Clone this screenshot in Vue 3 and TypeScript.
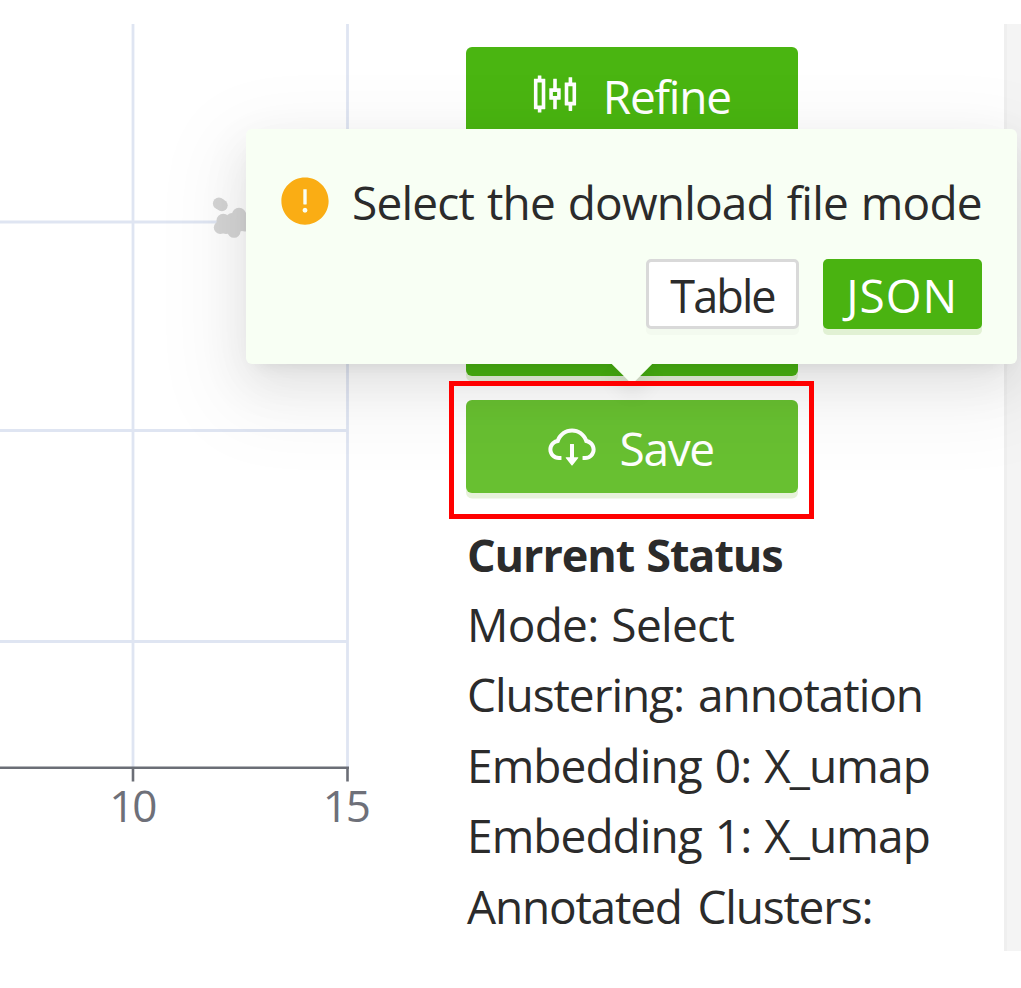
<script setup lang="ts">
interface StatusLine {
  id: string
  text: string
}

const statusLines: StatusLine[] = [
  { id: 'mode', text: 'Mode: Select' },
  { id: 'clustering', text: 'Clustering: annotation' },
  { id: 'embedding', text: 'Embedding 0: X_umap' },
  { id: 'embedding', text: 'Embedding 1: X_umap' },
  { id: 'annotated', text: 'Annotated Clusters:' },
]

const columns: number[] = [133, 347.5]
const rows: number[] = [198, 406.5, 617.5]

// Scatter points of the visible cluster: x, y, radius
const points: [number, number, number][] = [
  [218.9, 179.4, 6],
  [221.8, 181.3, 5.9],
  [223.3, 196.5, 6.8],
  [231, 199, 7.5],
  [239, 190.8, 7],
  [232, 195, 6],
  [220.3, 203.5, 6.5],
  [226, 203, 7],
  [234, 207.3, 6.5],
  [239, 198, 9.5],
  [245, 198, 9.5],
]
</script>

<template>
  <main class="page">
    <svg class="chart" width="466" height="927" viewBox="0 0 466 927">
      <g class="grid">
        <line v-for="x in columns" :key="x" :x1="x" :x2="x" y1="0" y2="744" />
        <line v-for="y in rows" :key="y" x1="0" x2="348" :y1="y" :y2="y" />
      </g>
      <g class="axis">
        <line x1="0" x2="349" y1="743.7" y2="743.7" />
        <line v-for="x in columns" :key="x" :x1="x" :x2="x" y1="743.7" y2="757.5" />
      </g>
      <g class="points">
        <circle v-for="(p, i) in points" :key="i" :cx="p[0]" :cy="p[1]" :r="p[2]" />
      </g>
      <text class="tick" x="132.3" y="798">10</text>
      <text class="tick" x="345.8" y="798">15</text>
    </svg>

    <aside class="sidebar">
      <div class="actions">
        <button class="action">
          <svg class="icon" viewBox="0 0 1024 1024">
            <path d="M320 224h-66v-56c0-4.4-3.6-8-8-8h-52c-4.4 0-8 3.6-8 8v56h-66c-4.4 0-8 3.6-8 8v560c0 4.4 3.6 8 8 8h66v56c0 4.4 3.6 8 8 8h52c4.4 0 8-3.6 8-8v-56h66c4.4 0 8-3.6 8-8V232c0-4.4-3.6-8-8-8zm-60 508h-80V292h80v440zm644-436h-66v-96c0-4.4-3.6-8-8-8h-52c-4.4 0-8 3.6-8 8v96h-66c-4.4 0-8 3.6-8 8v416c0 4.4 3.6 8 8 8h66v96c0 4.4 3.6 8 8 8h52c4.4 0 8-3.6 8-8v-96h66c4.4 0 8-3.6 8-8V304c0-4.4-3.6-8-8-8zm-60 364h-80V364h80v296zM612 404h-66V232c0-4.4-3.6-8-8-8h-52c-4.4 0-8 3.6-8 8v172h-66c-4.4 0-8 3.6-8 8v200c0 4.4 3.6 8 8 8h66v172c0 4.4 3.6 8 8 8h52c4.4 0 8-3.6 8-8V620h66c4.4 0 8-3.6 8-8V412c0-4.4-3.6-8-8-8zm-60 145a3 3 0 01-3 3h-74a3 3 0 01-3-3v-74a3 3 0 013-3h74a3 3 0 013 3v74z" />
          </svg>
          <span class="label refine">Refine</span>
        </button>
        <button class="action"></button>
        <button class="action"></button>
        <button class="action hover">
          <svg class="icon" viewBox="0 0 1024 1024">
            <path d="M624 706.3h-74.1V464c0-4.4-3.6-8-8-8h-60c-4.4 0-8 3.6-8 8v242.3H400c-6.7 0-10.4 7.7-6.3 12.9l112 141.7a8 8 0 0012.6 0l112-141.7c4.1-5.2.4-12.9-6.3-12.9z" />
            <path d="M811.4 366.7C765.6 245.9 648.9 160 512.2 160S258.8 245.8 213 366.6C127.3 389.1 64 467.2 64 560c0 110.5 89.5 200 199.9 200H304c4.4 0 8-3.6 8-8v-60c0-4.4-3.6-8-8-8h-40.1c-33.7 0-65.4-13.4-89-37.7-23.5-24.2-36-56.8-34.9-90.6.9-26.4 9.9-51.2 26.2-72.1 16.7-21.3 40.1-36.8 66.1-43.7l37.9-9.9 13.9-36.6c8.6-22.8 20.6-44.1 35.7-63.4a245.6 245.6 0 0152.4-49.9c41.1-28.9 89.5-44.2 140-44.2s98.9 15.3 140 44.2c19.9 14 37.5 30.8 52.4 49.9 15.1 19.3 27.1 40.7 35.7 63.4l13.8 36.5 37.8 10C846.1 454.5 884 503.8 884 560c0 33.1-12.9 64.3-36.3 87.7a123.07 123.07 0 01-87.6 36.3H720c-4.4 0-8 3.6-8 8v60c0 4.4 3.6 8 8 8h40.1C870.5 760 960 670.5 960 560c0-92.7-63.1-170.7-148.6-193.3z" />
          </svg>
          <span class="label save">Save</span>
        </button>
      </div>
      <section class="status">
        <div class="title"><strong class="heading">Current Status</strong></div>
        <div v-for="line in statusLines" :key="line.text">
          <span :class="line.id">{{ line.text }}</span>
        </div>
      </section>
    </aside>
    <div class="scrollbar"></div>

    <div class="popover">
      <div class="message">
        <svg class="warning" viewBox="0 0 1024 1024">
          <path d="M512 64C264.6 64 64 264.6 64 512s200.6 448 448 448 448-200.6 448-448S759.4 64 512 64zm-32 232c0-4.4 3.6-8 8-8h48c4.4 0 8 3.6 8 8v272c0 4.4-3.6 8-8 8h-48c-4.4 0-8-3.6-8-8V296zm32 440a48.01 48.01 0 010-96 48.01 48.01 0 010 96z" />
        </svg>
        <span class="question">Select the download file mode</span>
      </div>
      <div class="choices">
        <button class="choice plain"><span class="table">Table</span></button>
        <button class="choice primary"><span class="json">JSON</span></button>
      </div>
      <span class="arrow"></span>
    </div>
    <div class="highlight"></div>
  </main>
</template>

<style scoped>
.page {
  position: relative;
  box-sizing: border-box;
  display: flex;
  width: 1021px;
  height: 988px;
  padding: 24px 0 37px;
  overflow: hidden;
  background: #fff;
  color: #2b2b2b;
  font-family: 'Open Sans', 'Noto Sans', sans-serif;
  font-size: 46px;
  line-height: 70.4px;
  white-space: nowrap;
}
.chart {
  flex: none;
  display: block;
}
.grid line {
  stroke: #dfe5f2;
  stroke-width: 2.8;
}
.axis line {
  stroke: #6b6e76;
  stroke-width: 2.6;
}
.points circle {
  fill: #d6d6d6;
}
.tick {
  fill: #6e7079;
  font-size: 44px;
  letter-spacing: -2px;
  text-anchor: middle;
}
.sidebar {
  flex: none;
  width: 538px;
  padding-top: 23px;
  box-sizing: border-box;
}
.actions {
  display: flex;
  flex-direction: column;
  gap: 24px;
  width: 332px;
}
button {
  box-sizing: border-box;
  display: flex;
  align-items: center;
  justify-content: center;
  padding: 0;
  border: 0;
  border-radius: 6px;
  color: #fff;
  font: inherit;
}
.action {
  height: 93.6px;
  background: #4ab511;
  box-shadow: 0 5.5px 0 #e7f2da;
}
.action.hover {
  background: #68c031;
}
.icon {
  width: 54px;
  height: 54px;
  margin-right: 20.5px;
  fill: #fff;
}
.label {
  padding-top: 4px;
  text-align: left;
}
.refine {
  width: 133px;
  letter-spacing: -1.2px;
}
.save {
  width: 99.5px;
  letter-spacing: -1.3px;
}
.status {
  padding: 26px 0 0 1px;
}
.title {
  height: 69.5px;
}
.heading {
  font-size: 45px;
  letter-spacing: -1.1px;
  word-spacing: 1.5px;
}
.mode {
  letter-spacing: -0.7px;
  word-spacing: 1.5px;
}
.clustering {
  letter-spacing: -1.05px;
  word-spacing: 3px;
}
.embedding {
  letter-spacing: -0.93px;
  word-spacing: 1.9px;
}
.annotated {
  letter-spacing: -1.2px;
  word-spacing: 5px;
}
.scrollbar {
  box-sizing: border-box;
  width: 17px;
  border-left: 3px solid #efefef;
  background: #f4f4f4;
}
.popover {
  position: absolute;
  left: 246px;
  top: 129px;
  box-sizing: border-box;
  width: 771px;
  height: 235px;
  padding: 37.5px 35.5px 35px 31.5px;
  border-radius: 6px;
  background: #f8fff4;
  box-shadow:
    0 9px 18px -12px rgba(0, 0, 0, 0.12),
    0 18px 47px rgba(0, 0, 0, 0.08),
    0 26px 82px 23px rgba(0, 0, 0, 0.05);
}
.message {
  display: flex;
  align-items: flex-start;
  height: 92.5px;
}
.warning {
  flex: none;
  width: 54px;
  height: 54px;
  margin: 7.7px 20.5px 0 0;
  fill: #faad14;
}
.question {
  letter-spacing: -0.8px;
  word-spacing: 1.6px;
}
.choices {
  display: flex;
  justify-content: flex-end;
  gap: 24px;
}
.choice {
  height: 70px;
  padding-top: 2.5px;
  border-radius: 5px;
}
.choice.plain {
  width: 153px;
  padding-top: 4px;
  border: 3px solid #d9d9d9;
  background: #fff;
  box-shadow: 0 6px 0 #f3faef;
  color: #2b2b2b;
}
.choice.primary {
  width: 158.5px;
  background: #4ab311;
  box-shadow: 0 6px 0 #e1f1d3;
}
.table {
  font-size: 45px;
  letter-spacing: -1.9px;
}
.json {
  letter-spacing: 1px;
}
.arrow {
  position: absolute;
  left: 371px;
  top: 219px;
  width: 30px;
  height: 30px;
  transform: rotate(45deg);
  background: #f8fff4;
  box-shadow: 9px 9px 20px rgba(0, 0, 0, 0.07);
  clip-path: polygon(100% 0, 200% 0, 200% 200%, 0 200%, 0 100%);
}
.highlight {
  position: absolute;
  left: 449px;
  top: 381px;
  box-sizing: border-box;
  width: 365px;
  height: 138px;
  border: 5px solid #f00;
}
</style>
